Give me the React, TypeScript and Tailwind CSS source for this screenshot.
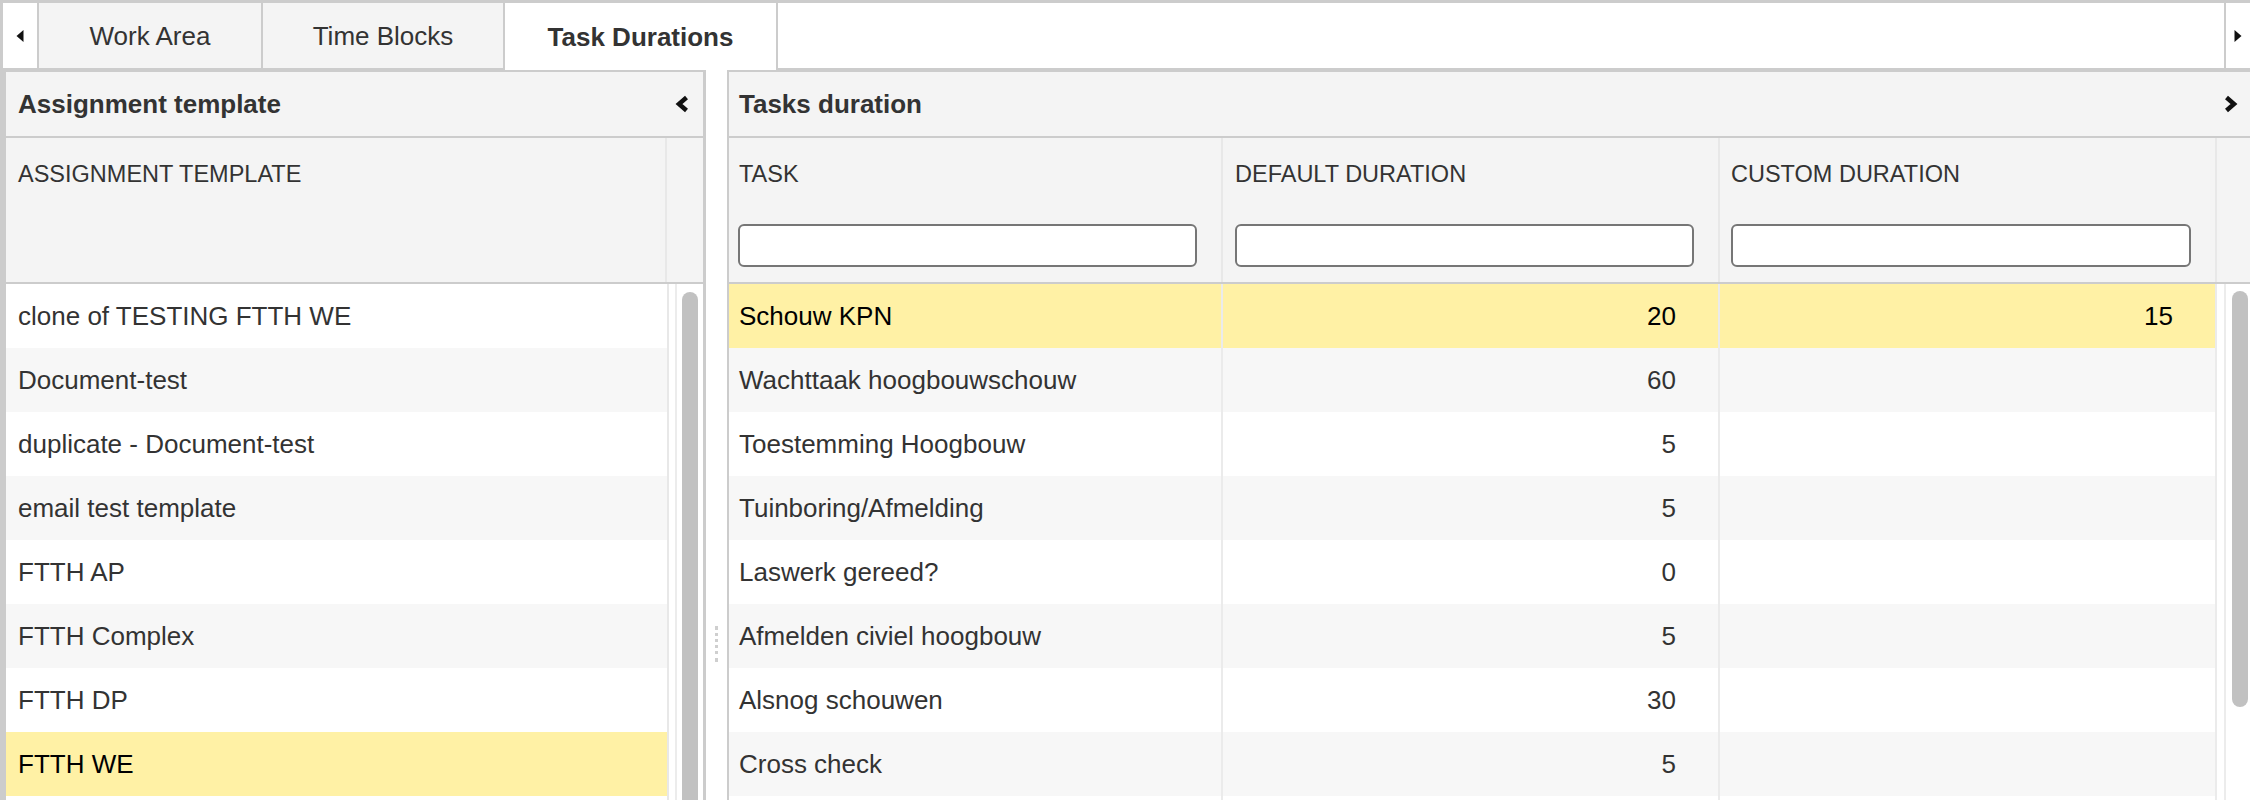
import React from "react";

const leftRows = [
  "clone of TESTING FTTH WE",
  "Document-test",
  "duplicate - Document-test",
  "email test template",
  "FTTH AP",
  "FTTH Complex",
  "FTTH DP",
  "FTTH WE",
  "",
];

const rightRows: [string, string, string][] = [
  ["Schouw KPN", "20", "15"],
  ["Wachttaak hoogbouwschouw", "60", ""],
  ["Toestemming Hoogbouw", "5", ""],
  ["Tuinboring/Afmelding", "5", ""],
  ["Laswerk gereed?", "0", ""],
  ["Afmelden civiel hoogbouw", "5", ""],
  ["Alsnog schouwen", "30", ""],
  ["Cross check", "5", ""],
  ["", "", ""],
];

function TriLeft() {
  return (
    <svg width="8" height="12" viewBox="0 0 8 12">
      <polygon points="7.5,0 7.5,12 0.5,6" fill="#111" />
    </svg>
  );
}
function TriRight() {
  return (
    <svg width="8" height="12" viewBox="0 0 8 12">
      <polygon points="0.5,0 0.5,12 7.5,6" fill="#111" />
    </svg>
  );
}
function ChevLeft() {
  return (
    <svg width="14" height="18" viewBox="0 0 14 18">
      <polyline points="11.5,2.5 4,9 11.5,15.5" fill="none" stroke="#111" strokeWidth="4.5" strokeLinejoin="miter" />
    </svg>
  );
}
function ChevRight() {
  return (
    <svg width="14" height="18" viewBox="0 0 14 18">
      <polyline points="2.5,2.5 10,9 2.5,15.5" fill="none" stroke="#111" strokeWidth="4.5" strokeLinejoin="miter" />
    </svg>
  );
}

function FilterInput() {
  return <div className="h-[43px] ml-[9px] mr-[24px] rounded-[6px] border-2 border-[#767676] bg-white" />;
}

export default function App() {
  return (
    <div className="w-[2250px] h-[800px] overflow-hidden bg-white text-[#333] font-['Liberation_Sans',Arial,sans-serif]">
      {/* Tab bar */}
      <div className="flex h-[70px] border-t-[3px] border-l-[3px] border-[#cccccc]">
        <div className="w-[36px] flex items-center justify-center bg-white border-r-2 border-b-2 border-[#cccccc]">
          <TriLeft />
        </div>
        <div className="w-[224px] flex items-center justify-center bg-[#f4f4f4] border-r-2 border-b-2 border-[#cccccc] text-[26px] pt-[2px]">
          Work Area
        </div>
        <div className="w-[242px] flex items-center justify-center bg-[#f4f4f4] border-r-2 border-b-2 border-[#cccccc] text-[26px] pt-[2px]">
          Time Blocks
        </div>
        <div className="w-[273px] flex items-center justify-center bg-white border-r-2 border-[#cccccc] text-[26px] font-bold pt-[2px]">
          Task Durations
        </div>
        <div className="flex-1 bg-white border-r-2 border-b-2 border-[#cccccc]" />
        <div className="w-[24px] flex items-center justify-center bg-white border-b-2 border-[#cccccc]">
          <TriRight />
        </div>
      </div>

      {/* Panels */}
      <div className="flex h-[730px] border-l-[3px] border-[#cccccc]">
        {/* Left panel */}
        <div className="w-[703px] flex flex-col border-x-[3px] border-t-2 border-[#cccccc]">
          <div className="h-[66px] flex items-center justify-between bg-[#f4f4f4] border-b-2 border-[#cccccc] pl-[12px] pr-[14px]">
            <span className="text-[26px] font-bold">Assignment template</span>
            <ChevLeft />
          </div>
          <div className="h-[146px] flex bg-[#f4f4f4] border-b-2 border-[#cccccc]">
            <div className="w-[661px] pl-[12px] pt-[22px] text-[23.5px] leading-[28px] uppercase border-r-2 border-[#e8e8e8]">
              Assignment template
            </div>
            <div className="flex-1" />
          </div>
          <div className="flex flex-1 overflow-hidden">
            <div className="w-[661px] flex flex-col">
              {leftRows.map((r, i) => (
                <div
                  key={i}
                  className={
                    "h-[64px] shrink-0 flex items-center pl-[12px] text-[26px] " +
                    (i === 7 ? "bg-[#fff1a5] text-black" : i % 2 === 1 ? "bg-[#f7f7f7]" : "bg-white")
                  }
                >
                  {r}
                </div>
              ))}
            </div>
            <div className="flex-1 flex border-l-2 border-[#e8e8e8] pl-[6px]">
              <div className="flex-1 border-l-2 border-[#ececec] pl-[5px] pt-[8px]">
                <div className="w-[16px] h-[600px] rounded-full bg-[#c1c1c1]" />
              </div>
            </div>
          </div>
        </div>

        {/* Splitter */}
        <div className="w-[21px] flex justify-center pt-[556px]">
          <div className="h-[36px] border-l-[3px] border-dotted border-[#cfcfcf]" />
        </div>

        {/* Right panel */}
        <div className="flex-1 flex flex-col border-l-2 border-t-2 border-[#cccccc]">
          <div className="h-[66px] flex items-center justify-between bg-[#f4f4f4] border-b-2 border-[#cccccc] pl-[10px] pr-[12px]">
            <span className="text-[26px] font-bold">Tasks duration</span>
            <ChevRight />
          </div>
          <div className="h-[146px] flex bg-[#f4f4f4] border-b-2 border-[#cccccc]">
            <div className="w-[494px] flex flex-col border-r-2 border-[#e8e8e8]">
              <div className="pl-[10px] pt-[22px] text-[23.5px] leading-[28px] h-[86px]">TASK</div>
              <FilterInput />
            </div>
            <div className="w-[497px] flex flex-col border-r-2 border-[#e8e8e8]">
              <div className="pl-[12px] pt-[22px] text-[23.5px] leading-[28px] h-[86px]">DEFAULT DURATION</div>
              <div className="pl-[3px]">
                <FilterInput />
              </div>
            </div>
            <div className="w-[497px] flex flex-col border-r-2 border-[#e8e8e8]">
              <div className="pl-[11px] pt-[22px] text-[23.5px] leading-[28px] h-[86px]">CUSTOM DURATION</div>
              <div className="pl-[2px]">
                <FilterInput />
              </div>
            </div>
            <div className="flex-1" />
          </div>
          <div className="flex flex-1 overflow-hidden">
            <div className="w-[1488px] flex flex-col">
              {rightRows.map((r, i) => {
                const bg = i === 0 ? "bg-[#fff1a5] text-black" : i % 2 === 1 ? "bg-[#f7f7f7]" : "bg-white";
                return (
                  <div key={i} className={"h-[64px] shrink-0 flex text-[26px] " + bg}>
                    <div className="w-[494px] flex items-center pl-[10px] border-r-2 border-[#ebebeb]">{r[0]}</div>
                    <div className="w-[497px] flex items-center justify-end pr-[42px] border-r-2 border-[#ebebeb]">{r[1]}</div>
                    <div className="w-[497px] flex items-center justify-end pr-[42px] border-r-2 border-[#ebebeb]">{r[2]}</div>
                  </div>
                );
              })}
            </div>
            <div className="flex-1 flex pl-[7px]">
              <div className="flex-1 border-l-2 border-[#ececec] pl-[6px] pt-[7px]">
                <div className="w-[16px] h-[416px] rounded-full bg-[#c1c1c1]" />
              </div>
            </div>
          </div>
        </div>
      </div>
    </div>
  );
}
